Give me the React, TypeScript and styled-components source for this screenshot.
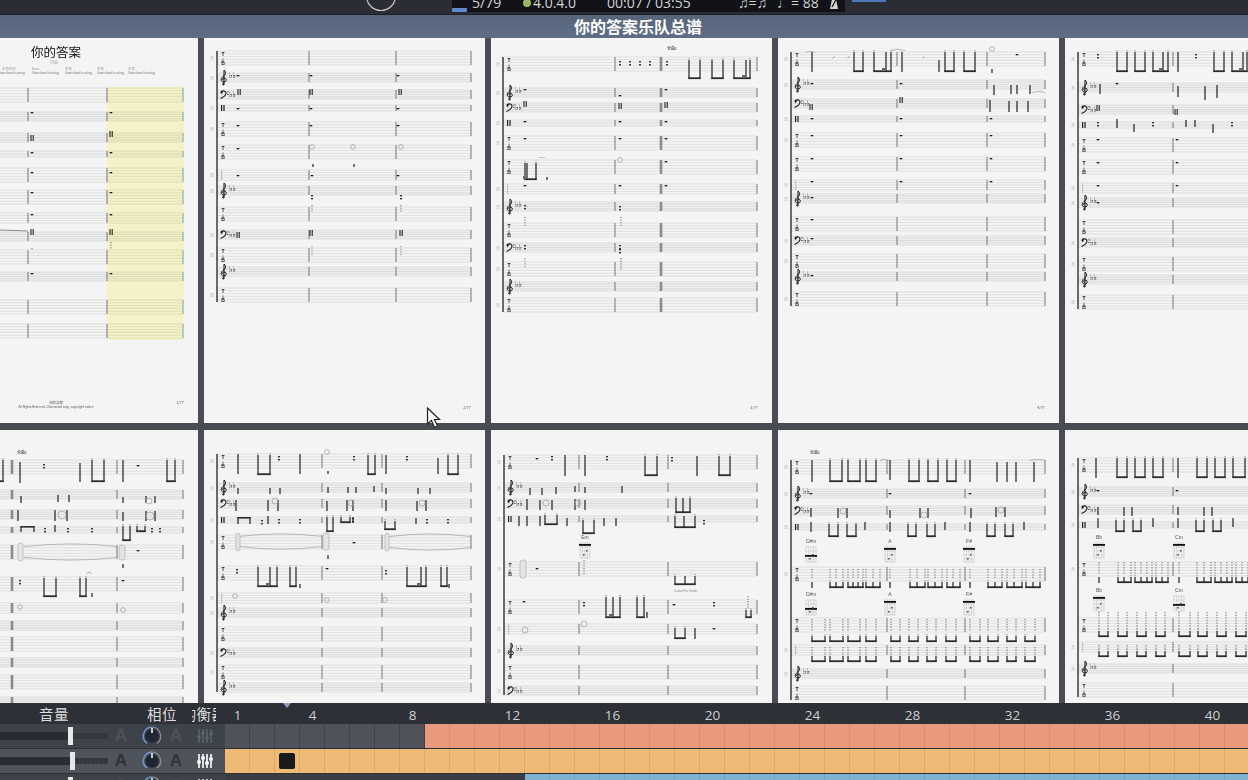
import React from 'react';
import styled, { createGlobalStyle } from 'styled-components';

const Global = createGlobalStyle`
  html, body { margin: 0; padding: 0; width: 1248px; height: 780px; overflow: hidden; background: #4a4c53; }
  #root { width: 1248px; height: 780px; }
`;

const CJK = `"Noto Sans CJK SC", "Liberation Sans", sans-serif`;

const Screen = styled.div`
  position: relative; width: 1248px; height: 780px; overflow: hidden;
  display: flex; flex-direction: column; font-family: ${CJK};
`;
const TopBar = styled.header`
  height: 15px; flex: none; background: #2a2d35; display: flex; overflow: hidden;
  padding-left: 366px; gap: 56px; box-sizing: border-box; border-bottom: 1px solid #1c1f26;
`;
const PlayArc = styled.svg`width: 30px; height: 14px; flex: none;`;
const Transport = styled.div`
  width: 393px; height: 12px; flex: none; background: #111319; display: flex; align-items: flex-end;
  overflow: hidden; color: #d4d4d4; font: 14px/14px "Open Sans", "Liberation Sans", sans-serif;
`;
const ProgressStub = styled.div`width: 15px; height: 4px; flex: none; background: #6288cc; border-radius: 1px;`;
const TItem = styled.div<{ $w: number }>`
  width: ${p => p.$w}px; flex: none; white-space: nowrap; margin-bottom: 2px; display: flex; align-items: center; gap: 2px;
`;
const StatusDot = styled.span`width: 8px; height: 8px; border-radius: 50%; background: #9ab95c; flex: none;`;
const MetronomeIcon = styled.svg`width: 10px; height: 12px; flex: none; margin-bottom: 0;`;
const TopAccent = styled.div`width: 34px; height: 2px; background: #4d76b8; margin-left: -49px; flex: none;`;
const TitleBar = styled.div`
  height: 23px; flex: none; background: linear-gradient(#566579, #5f6e86); color: #fff;
  display: flex; align-items: center; justify-content: center; box-sizing: border-box;
  font: bold 16px/21px ${CJK}; padding-left: 28px;
`;
const Sheets = styled.main`
  flex: 1; min-height: 0; overflow: hidden; background: #4a4c53;
  display: grid; grid-template-columns: repeat(5, 280.5px); grid-auto-rows: 385px; column-gap: 6.5px; row-gap: 7px;
  margin-left: -83px; width: 1440px;
`;
const PageSheet = styled.svg`
  display: block; width: 280.5px; height: 385px; background: #f4f4f5; filter: blur(0.4px);
`;
const Highlight = styled.rect`mix-blend-mode: multiply;`;
const Cursor = styled.svg`position: absolute; left: 426px; top: 407px; width: 16px; height: 22px;`;

const Panel = styled.section`
  height: 77px; flex: none; background: #2d3037; overflow: hidden; display: flex; flex-direction: column; position: relative;
`;
const HeaderRow = styled.div`height: 21px; flex: none; display: flex; color: #dcdcdc;`;
const HeadCell = styled.div<{ $w: number; $pl?: number }>`
  width: ${p => p.$w}px; box-sizing: border-box; padding-left: ${p => p.$pl || 0}px; flex: none; overflow: hidden;
  display: flex; justify-content: center; white-space: nowrap; font: 14.5px/22px ${CJK}; letter-spacing: .4px;
`;
const Ruler = styled.div`flex: 1; display: flex; position: relative;`;
const Tick = styled.div`
  width: 25px; flex: none; text-align: center; overflow: visible; color: #cfd0d2;
  font: 13.5px/24px "Open Sans", "Liberation Sans", sans-serif;
`;
const Marker = styled.div`
  position: absolute; left: 58px; top: 0; width: 0; height: 0;
  border-left: 4px solid transparent; border-right: 4px solid transparent; border-top: 5px solid #8d9dc0;
`;
const TrackRow = styled.div`height: 25px; flex: none; display: flex;`;
const TrackHead = styled.div<{ $bg: string }>`
  width: 225px; height: 24px; flex: none; background: ${p => p.$bg}; display: flex; align-items: center;
`;
const Fader = styled.div`position: relative; width: 108px; height: 8px; flex: none; display: flex;`;
const FaderFill = styled.div`width: 72px; background: #2a2c33; flex: none;`;
const FaderRest = styled.div`flex: 1; background: repeating-linear-gradient(90deg, #33353c 0 3px, #3c3e45 3px 4px); margin: 1px 0;`;
const FaderHandle = styled.div<{ $x: number }>`
  position: absolute; left: ${p => p.$x}px; top: -5px; width: 5px; height: 18px; background: #e8e8ea;
`;
const AMark = styled.span<{ $on?: boolean; $w: number }>`
  width: ${p => p.$w}px; flex: none; text-align: center; font: bold 17px/16px "Liberation Sans", sans-serif;
  color: ${p => (p.$on ? '#2f3239' : '#4f5259')};
`;
const Knob = styled.svg`width: 20px; height: 20px; flex: none; margin-left: 8px;`;
const EqIcon = styled.svg`width: 16px; height: 16px; flex: none; margin-left: 7px;`;
const Cells = styled.div`flex: 1; display: flex; height: 24px;`;
const Cell = styled.div<{ $bg: string; $line: string }>`
  width: 25px; flex: none; box-sizing: border-box; background: ${p => p.$bg}; border-right: 1px solid ${p => p.$line};
  display: flex; align-items: center; justify-content: center;
`;
const Clip = styled.div`width: 16px; height: 16px; border-radius: 2px; background: #1a1a1a; margin-right: 1px;`;

type Kind = 't' | 'g' | 'f' | 'd' | 's';
type Mark = any[];
interface Spec { x0: number; y0: number; left?: number; bars: number[]; thick?: number[]; staves: [Kind, number][]; marks: Mark[]; page?: string; }

const HEIGHT: Record<Kind, number> = { t: 14, g: 9, f: 9, d: 6, s: 10 };
const LINES: Record<Kind, number> = { t: 6, g: 5, f: 5, d: 3, s: 5 };

const Staff = ({ kind, y, l, r }: { kind: Kind; y: number; l: number; r: number }) => {
  const h = HEIGHT[kind], n = LINES[kind];
  return (
    <g>
      {(kind === 'g' || kind === 'f' || kind === 'd') && <rect x={l} y={y} width={r - l} height={h} fill="#eeeeef" />}
      {Array.from({ length: n }, (_, i) => (
        <line key={i} x1={l} x2={r} y1={y + (h * i) / (n - 1)} y2={y + (h * i) / (n - 1)} stroke="#d2d2d4" strokeWidth={0.6} />
      ))}
    </g>
  );
};

const FLATS = (x: number, y: number) => (
  <text x={x} y={y} fontSize={8.5} letterSpacing={-.8} fontFamily="DejaVu Sans, sans-serif" fill="#333">♭♭</text>
);

const Clef = ({ kind, y, l }: { kind: Kind; y: number; l: number }) => {
  if (kind === 'g')
    return (
      <g transform={`translate(${l + 3},${y - 3})`}>
        <path d="M4 15 C2 15.5 2 13 4 13.3 M4 15 L4 0 C6.5 2 6 4.5 3 6.5 C0 9 1 12 4 12 C7 12 7 8 4 8 C2.2 8 2 10 3.6 10" fill="none" stroke="#111" strokeWidth={1} />
        {FLATS(9, 8)}
      </g>
    );
  if (kind === 'f')
    return (
      <g transform={`translate(${l + 3},${y})`}>
        <path d="M1 2 C3 0 6.5 1 6 3.5 C5.5 6 3 7.5 .5 8.5" fill="none" stroke="#111" strokeWidth={1.1} />
        <circle cx={1.6} cy={2.6} r={1.1} fill="#111" />
        <rect x={7.4} y={1.4} width={1} height={1} fill="#111" /><rect x={7.4} y={4} width={1} height={1} fill="#111" />
        {FLATS(9, 7)}
      </g>
    );
  if (kind === 'd') return <g><rect x={l + 4} y={y} width={1.2} height={6} fill="#222" /><rect x={l + 6.4} y={y} width={1.2} height={6} fill="#222" /></g>;
  if (kind === 's') return <rect x={l + 4} y={y} width={1.2} height={10} fill="#c4c4c4" />;
  return (
    <text x={l + 6} y={y + 1} textAnchor="middle" fontSize={5} fontWeight={700} fontFamily="Liberation Sans, sans-serif" fill="#222">
      <tspan x={l + 6} dy={4}>T</tspan><tspan x={l + 6} dy={4.5} fontSize={3.5} fill="#999">A</tspan><tspan x={l + 6} dy={4.5}>B</tspan>
    </text>
  );
};

const Glyph = ({ m }: { m: Mark }) => {
  const k = m[0];
  if (k === 'u') {
    const [, a, b, y1, y2, extra] = m;
    return (
      <g>
        <rect x={a - .6} y={y1} width={1.2} height={y2 - y1} fill="#222" />
        <rect x={b - .6} y={y1} width={1.2} height={y2 - y1} fill="#222" />
        <rect x={a - .6} y={y2 - 1.7} width={b - a + 1.2} height={1.8} fill="#2c2c2c" />
        {extra != null && <rect x={extra - .6} y={y1} width={1.2} height={y2 - y1} fill="#222" />}
        {extra != null && <rect x={extra - 4} y={y2 - 4} width={4} height={3} fill="#666" />}
        <rect x={a - .8} y={y1 - 2} width={1.6} height={1.2} fill="#aaa" />
        <rect x={b - .8} y={y1 - 2} width={1.6} height={1.2} fill="#aaa" />
      </g>
    );
  }
  if (k === 'n') {
    const [, a, b, y1, y2] = m;
    return (
      <g>
        <rect x={a - .6} y={y1} width={1.2} height={y2 - y1} fill="#222" />
        <rect x={b - .6} y={y1} width={1.2} height={y2 - y1} fill="#222" />
        <rect x={a - .6} y={y1} width={b - a + 1.2} height={1.6} fill="#2c2c2c" />
      </g>
    );
  }
  if (k === '|') return <rect x={m[1] - .6} y={m[2]} width={1.2} height={m[3] - m[2]} fill="#222" />;
  if (k === '-') return <rect x={m[1] - 1.3} y={m[2]} width={2.6} height={1.3} fill="#1a1a1a" />;
  if (k === 'B')
    return (
      <g>
        <rect x={m[1] - 1.5} y={m[2] - 3} width={1} height={6} fill="#111" />
        <rect x={m[1] + .7} y={m[2] - 3} width={1} height={6} fill="#111" />
      </g>
    );
  if (k === ':')
    return (
      <g>
        <rect x={m[1] - 1} y={m[2] - 2} width={2} height={1.4} fill="#333" />
        <rect x={m[1] - 1} y={m[2] + 1} width={2} height={1.4} fill="#333" />
      </g>
    );
  if (k === 'o') return <circle cx={m[1]} cy={m[2]} r={m[3] || 2.4} fill="none" stroke="#a3a3a3" strokeWidth={0.8} />;
  if (k === 'L') {
    const [, a, b, y, h] = m;
    return (
      <path d={`M${a} ${y + h * .2} Q${(a + b) / 2} ${y - h * .1} ${b} ${y + h * .2} M${a} ${y + h * .8} Q${(a + b) / 2} ${y + h * 1.1} ${b} ${y + h * .8}`} fill="none" stroke="#aaa" strokeWidth={.8} />
    );
  }
  if (k === '0') return <rect x={m[1]} y={m[2]} width={m[3]} height={m[4]} rx={2.5} fill="#e4e4e4" stroke="#b0b0b0" strokeWidth={.7} />;
  if (k === '~') return <path d={`M${m[1]} ${m[3] + 1.5} Q${(m[1] + m[2]) / 2} ${m[3] - 1} ${m[2]} ${m[3] + 1.5}`} fill="none" stroke="#999" strokeWidth={.7} />;
  if (k === 'v') {
    const items = [];
    for (let y = m[2]; y <= m[3]; y += 2.6) items.push(<rect key={y} x={m[1] - .8} y={y} width={1.6} height={1.2} fill={m[4] || '#9a9a9a'} />);
    return <g>{items}</g>;
  }
  if (k === 'c') {
    const [, x, y, label, barY] = m;
    return (
      <g>
        <text x={x} y={y - 4} textAnchor="middle" fontSize={5} fontFamily="Liberation Sans, sans-serif" fill="#555">{label}</text>
        <rect x={x - 5} y={y} width={10} height={15} fill="#f6f6f6" stroke="#a5a5a5" strokeWidth={.4} />
        {[2.5, 5, 7.5].map(d => <line key={d} x1={x - 5 + d} x2={x - 5 + d} y1={y} y2={y + 15} stroke="#b0b0b0" strokeWidth={.4} />)}
        {[4, 8, 12].map(d => <line key={d} x1={x - 5} x2={x + 5} y1={y + d} y2={y + d} stroke="#b0b0b0" strokeWidth={.4} />)}
        <rect x={x - 6} y={y + (barY ?? 1)} width={12} height={1.8} fill="#111" />
        <rect x={x - 2} y={y + 11} width={1.5} height={1.5} fill="#555" />
        <rect x={x + 1} y={y + 7} width={1.5} height={1.5} fill="#555" />
      </g>
    );
  }
  if (k === 'x')
    return <text x={m[1]} y={m[2]} textAnchor={m[5] || 'middle'} fontSize={m[3] || 4} fill={m[4] || '#666'} fontFamily={CJK}>{m[6] || ''}</text>;
  return null;
};

const dashes = (xs: number[], ys: number[]): Mark[] => ys.flatMap(y => xs.map(x => ['-', x, y]));

const strum = (g: number[], y1: number, y2: number, uy2: number): Mark[] => {
  const out: Mark[] = [];
  g.forEach(x => out.push(['v', x, y1, y2]));
  if (g.length > 1) out.push(['u', g[0], g[g.length - 1], uy2 - 6, uy2]);
  g.slice(1, -1).forEach(x => out.push(['|', x, uy2 - 6, uy2]));
  if (g.length === 1) out.push(['|', g[0], uy2 - 6, uy2]);
  return out;
};

const p4Groups = [[812], [830, 836, 843], [848, 853, 858, 863], [866, 873, 880], [890], [910, 917, 925], [928, 935, 942], [947, 953, 960], [970], [988, 995, 1002], [1007, 1014, 1022], [1026, 1033, 1040]];
const p5Groups = [[1099], [1118, 1124, 1131], [1135, 1141, 1147, 1152], [1156, 1162, 1168], [1179], [1197, 1204, 1211], [1215, 1221, 1227, 1232], [1236, 1242, 1248]];
const pairGroups4 = [[812, 825], [830, 843], [848, 860], [866, 876], [891, 900], [909, 918], [927, 936], [946, 956], [970, 980], [988, 998], [1007, 1016], [1025, 1035]];
const pairGroups5 = [[1099, 1108], [1118, 1127], [1137, 1146], [1156, 1165], [1179, 1190], [1198, 1207], [1217, 1226], [1236, 1246]];

const rep4Drum: Mark[] = [[811, 829, 838, 847, 856, 865], [890, 908, 916, 927, 935, 945], [970, 987, 995, 1005, 1013, 1024]].flatMap(([a, b, c, d, e, f]) => [
  ['|', a, 522, 532], ['u', b, c, 524, 537], ['u', d, e, 524, 537], ['|', f, 522, 530],
] as Mark[]);

const SPECS: Spec[] = [
  {
    x0: -83, y0: 38, left: -70, bars: [28, 107, 183],
    staves: [['t', 88], ['g', 112], ['f', 133], ['d', 151], ['t', 168], ['t', 190], ['s', 213], ['g', 232], ['t', 250], ['f', 272], ['t', 300], ['t', 324]],
    marks: [
      ...dashes([32, 111], [112, 152, 172, 192, 214, 273]),
      ['B', 32, 138], ['B', 111, 134], ['B', 32, 232], ['B', 111, 232], ['v', 111, 242, 248], ['v', 32, 248, 250],
      ['x', 32, 74, 3.6, '#777', 'start', 'Standard tuning'], ['x', 65, 74, 3.6, '#777', 'start', 'Standard tuning'],
      ['x', 97, 74, 3.6, '#777', 'start', 'Standard tuning'], ['x', 128, 74, 3.6, '#777', 'start', 'Standard tuning'],
      ['x', -2, 74, 3.6, '#777', 'start', 'Standard tuning'],
      ['x', 32, 70, 3.4, '#999', 'start', 'Bass'], ['x', 65, 70, 3.4, '#999', 'start', '吉他'], ['x', 97, 70, 3.4, '#999', 'start', '吉他'], ['x', 128, 70, 3.4, '#999', 'start', '主音'], ['x', 2, 70, 3.4, '#999', 'start', '主音吉他'],
      ['x', 56, 404, 3.4, '#555', 'middle', '你的答案'], ['x', 56, 408, 3, '#555', 'middle', 'All Rights Reserved. Unlicensed copy, copyright notice'], ['x', 180, 404, 3.6, '#555', 'middle', '1/77'],
    ],
    page: 'p1',
  },
  {
    x0: 204, y0: 38, left: 217, bars: [309, 396, 471],
    staves: [['t', 51], ['g', 73], ['f', 90], ['d', 105], ['t', 122], ['t', 145], ['s', 170], ['g', 186], ['t', 207], ['f', 230], ['t', 248], ['g', 267], ['t', 288]],
    marks: [
      ...dashes([238, 311, 398], [75, 108, 125]), ...dashes([238, 312, 398], [175]),
      ['B', 239, 92], ['B', 311, 92], ['B', 400, 92], ['-', 238, 148], ['o', 312, 147], ['o', 353, 147], ['o', 401, 147], ['|', 313, 164, 167], ['|', 354, 164, 167],
      [':', 312, 197], [':', 401, 197], ['v', 312, 205, 212], ['v', 401, 205, 212],
      ['B', 238, 235], ['B', 311, 233], ['B', 401, 233], ['v', 312, 246, 256, '#aaa'], ['v', 401, 246, 256, '#aaa'], ['x', 467, 409, 3.6, '#555', 'middle', '2/77'],
    ],
  },
  {
    x0: 491, y0: 38, left: 503, bars: [615, 757], thick: [661],
    staves: [['t', 57], ['g', 88], ['f', 103], ['d', 120], ['t', 136], ['t', 160], ['s', 184], ['g', 202], ['t', 223], ['f', 243], ['t', 262], ['g', 282], ['t', 298]],
    marks: [
      ['x', 672, 50, 4, '#222', 'middle', '全曲1'], [':', 620, 63], [':', 630, 63], [':', 640, 63], [':', 650, 63], [':', 667, 63],
      ['u', 689, 700, 60, 79], ['u', 712, 723, 60, 79], ['u', 734, 750, 60, 79, 746],
      ['-', 525, 89], ['-', 666, 89], ['-', 620, 95], ['B', 525, 104], ['B', 620, 106], ['B', 666, 105],
      ...dashes([525, 620, 666], [121, 138, 185]), ['-', 666, 161], ['o', 620, 160], ['u', 525, 536, 163, 180, 527], ['|', 547, 177, 180],
      ['x', 542, 158, 4, '#222', 'middle', '......'],
      [':', 525, 207], [':', 620, 208], ['v', 525, 217, 225], ['v', 621, 217, 225], [':', 525, 247], [':', 620, 247], [':', 620, 251],
      ['v', 525, 258, 268, '#aaa'], ['v', 621, 258, 270, '#7aa67e'], ['x', 754, 409, 3.6, '#555', 'middle', '3/77'],
    ],
  },
  {
    x0: 778, y0: 38, left: 791, bars: [897, 987, 1045],
    staves: [['t', 52], ['g', 80], ['f', 99], ['d', 116], ['t', 133], ['t', 157], ['s', 180], ['g', 194], ['t', 217], ['f', 236], ['t', 254], ['g', 272], ['t', 292]],
    marks: [
      ['|', 812, 52, 72], ['u', 854, 863, 52, 72], ['u', 874, 891, 52, 72, 886], ['|', 902, 52, 72], ['|', 939, 60, 72], ['u', 945, 954, 52, 72], ['u', 964, 975, 52, 72],
      ['x', 833, 58, 6, '#444', 'middle', '⸝'], ['x', 848, 58, 6, '#444', 'middle', '⸝'], ['x', 923, 58, 6, '#444', 'middle', '⸝'],
      ['o', 992, 49], ['|', 992, 69, 73], ['-', 1017, 54], ['~', 806, 815, 51], ['~', 890, 905, 49],
      ['-', 812, 83], ['-', 901, 83], ['|', 994, 85, 95], ['|', 1011, 85, 94], ['|', 1017, 85, 94], ['|', 1030, 85, 94], ['~', 1032, 1045, 91],
      ['B', 811, 107], ['B', 901, 100], ['|', 990, 100, 112], ['|', 1009, 101, 112], ['|', 1017, 101, 112], ['|', 1028, 101, 112],
      ...dashes([812, 901, 991], [118, 135, 158, 181]), ['-', 812, 197], ['-', 812, 219], ['-', 812, 238], ['-', 812, 275],
      ['x', 1041, 409, 3.6, '#555', 'middle', '4/77'],
    ],
  },
  {
    x0: 1065, y0: 38, left: 1078, bars: [1173, 1331],
    staves: [['t', 52], ['g', 83], ['f', 105], ['d', 122], ['t', 138], ['t', 160], ['s', 183], ['g', 198], ['t', 220], ['f', 238], ['t', 257], ['g', 275], ['t', 295]],
    marks: [
      [':', 1098, 56], ['u', 1117, 1127, 52, 72], ['u', 1135, 1145, 52, 72], ['u', 1153, 1168, 52, 72, 1163], ['|', 1178, 52, 72], [':', 1196, 56], ['u', 1214, 1224, 52, 72], ['u', 1232, 1247, 52, 72, 1243],
      ['|', 1100, 84, 94], ['-', 1117, 83], ['|', 1178, 86, 97], ['|', 1205, 86, 100], ['|', 1217, 85, 98],
      ['B', 1098, 108], ['B', 1176, 112], [':', 1098, 124], ['|', 1117, 119, 128], ['|', 1134, 124, 132], [':', 1153, 124], ['|', 1186, 120, 127], ['|', 1195, 120, 127], ['|', 1213, 124, 133], [':', 1232, 124],
      ...dashes([1098, 1177], [139, 162, 185]), ['-', 1098, 202],
    ],
  },
  {
    x0: -83, y0: 430, left: -70, bars: [117, 183], thick: [12],
    staves: [['t', 460], ['g', 490], ['f', 510], ['d', 527], ['t', 545], ['t', 577], ['s', 603], ['g', 621], ['t', 637], ['f', 658], ['t', 675], ['g', 697]],
    marks: [
      ['x', 22, 454, 4, '#222', 'middle', '全曲1'], ['u', -6, 3, 460, 482], ['|', 20, 462, 483], [':', 44, 466], ['|', 80, 463, 482], ['u', 92, 104, 460, 482], ['|', 123, 460, 482], ['-', 138, 465], ['u', 167, 175, 460, 482],
      ['|', 21, 496, 503], ['|', 58, 495, 502], ['|', 69, 495, 502], ['|', 123, 497, 503], ['|', 146, 496, 503], ['|', 155, 496, 503], ['o', 149, 501, 3],
      ['|', 18, 510, 521], ['|', 55, 510, 521], ['|', 67, 510, 521], ['|', 123, 512, 521], ['|', 146, 511, 521], ['|', 155, 511, 521], ['o', 62, 515, 4], ['o', 150, 516, 4],
      ['n', 21, 34, 526, 532], [':', 45, 530], ['|', 55, 525, 532], [':', 68, 530], [':', 92, 530], ['u', 123, 130, 526, 541], ['u', 137, 145, 526, 532], [':', 152, 530], [':', 160, 530],
      ['0', 18, 543, 5, 18], ['L', 24, 117, 543, 18], ['0', 119, 545, 6, 15], ['-', 138, 550], ['|', 123, 564, 568],
      [':', 20, 582], ['u', 44, 56, 578, 597], ['u', 80, 86, 578, 597], ['|', 92, 593, 597], ['-', 123, 580], ['~', 86, 92, 572],
      ['o', 20, 607], ['o', 123, 610],
    ],
  },
  {
    x0: 204, y0: 430, left: 217, bars: [322, 382, 471],
    staves: [['t', 454], ['g', 483], ['f', 499], ['d', 517], ['t', 535], ['t', 566], ['s', 593], ['g', 608], ['t', 627], ['f', 648], ['t', 665], ['g', 683]],
    marks: [
      ['|', 238, 454, 474], ['u', 258, 270, 455, 475], [':', 279, 458], ['|', 300, 454, 474], ['o', 327, 452], ['|', 328, 471, 474], [':', 354, 458], ['u', 368, 375, 455, 475], ['|', 386, 455, 474], [':', 407, 458], ['|', 438, 458, 474], ['u', 448, 458, 455, 475],
      ['|', 238, 488, 494], ['|', 270, 488, 494], ['|', 280, 488, 494], ['|', 328, 487, 493], ['|', 348, 487, 493], ['|', 356, 487, 493], ['|', 374, 486, 492], ['|', 386, 488, 494], ['|', 418, 488, 494], ['|', 430, 488, 494],
      ['|', 236, 500, 511], ['|', 268, 500, 511], ['|', 278, 500, 511], ['|', 327, 501, 511], ['|', 347, 500, 511], ['|', 353, 500, 511], ['|', 386, 500, 511], ['|', 417, 501, 511], ['|', 426, 500, 511], ['o', 275, 501, 3], ['o', 351, 503, 3], ['o', 422, 503, 3],
      ['n', 238, 250, 517, 524], [':', 262, 522], ['|', 268, 516, 524], [':', 279, 521], [':', 300, 521], ['u', 327, 333, 517, 532], ['u', 341, 350, 517, 523], [':', 353, 520], ['|', 353, 517, 523], ['u', 385, 395, 521, 530], ['|', 416, 518, 524], [':', 427, 521], [':', 448, 521],
      ['0', 236, 533, 4, 18], ['L', 240, 322, 533, 17], ['0', 323, 533, 6, 17], ['-', 354, 542], ['0', 385, 533, 4, 18], ['L', 389, 471, 533, 18], ['|', 328, 555, 559],
      [':', 237, 571], ['u', 258, 277, 567, 587, 270], ['u', 290, 296, 567, 587], ['|', 300, 584, 588], ['-', 327, 568], [':', 386, 572], ['u', 407, 426, 567, 587, 421], ['u', 441, 447, 567, 587], ['|', 449, 584, 588],
      ['o', 235, 596], ['o', 327, 600], ['o', 385, 600],
    ],
  },
  {
    x0: 491, y0: 430, left: 504, bars: [579, 668, 757],
    staves: [['t', 455], ['g', 483], ['f', 499], ['d', 516], ['t', 562], ['t', 600], ['s', 624], ['g', 646], ['t', 665], ['f', 686]],
    marks: [
      ['-', 537, 458], [':', 552, 458], ['|', 565, 455, 476], ['|', 585, 455, 476], [':', 607, 458], ['u', 645, 657, 456, 476], [':', 672, 459], ['|', 697, 456, 476], ['u', 719, 730, 456, 476],
      ['|', 530, 488, 495], ['|', 542, 488, 495], ['|', 556, 487, 494], ['|', 575, 486, 492], ['|', 585, 487, 493], ['|', 622, 486, 493],
      ['u', 676, 690, 498, 513], ['|', 683, 498, 513],
      ['|', 527, 499, 510], ['|', 540, 500, 510], ['|', 552, 500, 510], ['|', 575, 499, 510], ['|', 585, 500, 510], ['o', 546, 503, 3], ['o', 578, 503, 3],
      ['|', 519, 516, 526], ['|', 527, 516, 526], ['|', 540, 516, 526], ['u', 545, 557, 515, 525], ['|', 567, 518, 526], ['u', 583, 594, 520, 534], ['|', 604, 518, 526], ['|', 616, 518, 526], ['u', 675, 695, 516, 528], ['|', 684, 516, 528], [':', 704, 522],
      ['c', 585, 543, 'Em', 1], ['0', 520, 560, 6, 18], ['-', 537, 568], ['v', 584, 560, 575], ['u', 675, 695, 576, 585], ['|', 685, 576, 585], ['x', 686, 592, 3, '#888', 'middle', 'Guitar Pro Guitar'],
      ['-', 524, 601], [':', 584, 604], ['u', 606, 620, 597, 618, 613], ['u', 637, 644, 597, 618], ['|', 647, 612, 618], ['-', 674, 604], [':', 714, 604], ['v', 748, 596, 608], ['u', 746, 751, 610, 618],
      ['o', 584, 624, 3], ['o', 525, 630, 3], ['u', 675, 685, 628, 639], ['|', 695, 628, 639], ['-', 714, 628],
    ],
  },
  {
    x0: 778, y0: 430, left: 791, bars: [887, 965, 1045],
    staves: [['t', 460], ['g', 489], ['f', 506], ['d', 524], ['t', 567], ['t', 618], ['s', 645], ['g', 669], ['t', 686]],
    marks: [
      ['x', 815, 454, 4, '#222', 'middle', '全曲1'],
      ['|', 812, 460, 482], ['u', 830, 842, 460, 482], ['u', 848, 860, 460, 482], ['u', 866, 876, 460, 482], ['|', 890, 460, 480], ['u', 909, 919, 460, 482], ['u', 928, 938, 460, 482], ['u', 947, 956, 460, 482], ['|', 970, 460, 482], ['|', 997, 462, 482], ['|', 1007, 462, 482], ['|', 1016, 462, 482], ['|', 1034, 462, 482], ['~', 880, 889, 459], ['~', 1030, 1045, 459],
      ['-', 811, 493], ['-', 890, 493], ['-', 970, 493],
      ['|', 811, 508, 517], ['|', 838, 508, 518], ['|', 847, 508, 518], ['o', 843, 511, 3], ['|', 890, 510, 518], ['|', 920, 508, 518], ['|', 928, 508, 518], ['o', 924, 515, 3], ['|', 971, 508, 518], ['|', 996, 507, 517], ['|', 1005, 507, 517], ['o', 1001, 510, 3],
      ...rep4Drum,
      ['c', 811, 547, 'C#m', 8], ['c', 890, 547, 'A', 1], ['c', 969, 547, 'F#', 1], ['c', 811, 600, 'C#m', 8], ['c', 890, 600, 'A', 1], ['c', 969, 600, 'F#', 1],
      ...p4Groups.flatMap(g => strum(g, 569, 579, 588)),
      ...pairGroups4.flatMap(g => strum(g, 619, 632, 642)),
      ...pairGroups4.flatMap(g => strum(g, 647, 654, 662)),
    ],
  },
  {
    x0: 1065, y0: 430, left: 1078, bars: [1173, 1331],
    staves: [['t', 458], ['g', 487], ['f', 505], ['d', 522], ['t', 562], ['t', 618], ['s', 642], ['g', 664], ['t', 683]],
    marks: [
      ['|', 1096, 458, 478], ['u', 1117, 1127, 458, 478], ['u', 1135, 1145, 458, 478], ['u', 1153, 1163, 458, 478], ['|', 1178, 458, 478], ['u', 1197, 1207, 458, 478], ['u', 1215, 1225, 458, 478], ['u', 1233, 1245, 458, 478],
      ['-', 1098, 490], ['-', 1177, 490], ['|', 1098, 507, 515], ['|', 1124, 507, 516], ['|', 1132, 507, 516], ['|', 1178, 507, 515], ['|', 1204, 507, 516], ['|', 1212, 507, 516],
      ['|', 1098, 518, 528], ['u', 1116, 1124, 520, 532], ['u', 1133, 1141, 520, 532], ['|', 1153, 518, 527], ['|', 1178, 518, 528], ['u', 1196, 1204, 520, 532], ['u', 1213, 1221, 520, 532], ['|', 1233, 518, 527],
      ['c', 1099, 543, 'Bb', 1], ['c', 1179, 543, 'Cm', 1], ['c', 1099, 596, 'Bb', 1], ['c', 1179, 596, 'Cm', 8],
      ...p5Groups.flatMap(g => strum(g, 562, 574, 583)),
      ...pairGroups5.flatMap(g => strum(g, 612, 628, 637)),
      ...pairGroups5.flatMap(g => strum(g, 645, 650, 657)),
    ],
  },
];

const Sheet = ({ s }: { s: Spec }) => {
  const last = s.staves[s.staves.length - 1];
  const right = Math.max(...s.bars, ...(s.thick || []));
  const staffLeft = s.left ?? s.x0;
  return (
    <PageSheet viewBox={`${s.x0} ${s.y0} 280.5 385`}>
      {s.staves.map(([k, y], i) => <Staff key={i} kind={k} y={y} l={staffLeft} r={right} />)}
      {s.page === 'p1' && <Highlight x={107} y={87} width={77} height={253} fill="#fffed0" />}
      {s.staves.map(([k, y], i) => (
        <g key={i}>
          {s.bars.map(x => <rect key={x} x={x - .5} y={y} width={1} height={HEIGHT[k]} fill={s.page === 'p1' && x === 183 ? '#7fa8a0' : '#777'} />)}
          {(s.thick || []).map(x => <rect key={x} x={x - 1.3} y={y} width={2.6} height={HEIGHT[k]} fill="#8b8b8b" />)}
          <Clef kind={k} y={y} l={staffLeft} />
        </g>
      ))}
      {s.left != null && <rect x={s.left - .6} y={s.staves[0][1]} width={1.2} height={Math.max(0, last[1] + HEIGHT[last[0]] - s.staves[0][1])} fill="#111" />}
      {s.left != null && s.staves.map(([k, y], i) => (
        <text key={i} x={s.left! - 5} y={y + HEIGHT[k] / 2 + 2} textAnchor="middle" fontSize={4} fill="#aaa" fontFamily={CJK}>{i % 3 === 2 ? '' : '吉'}</text>
      ))}
      {s.marks.map((m, i) => <Glyph key={i} m={m} />)}
      {s.page === 'p1' && (
        <>
          <text x={56} y={57} textAnchor="middle" fontSize={12.5} fill="#111" fontFamily={CJK}>你的答案</text>
          <text x={54} y={64} textAnchor="middle" fontSize={4} fill="#aaa" fontFamily={CJK}>词曲</text>
          <path d="M-83 230 L0 230 L28 231" stroke="#888" strokeWidth={1} fill="none" />
        </>
      )}
    </PageSheet>
  );
};

const KnobGlyph = () => (
  <Knob viewBox="0 0 20 20">
    <circle cx={10} cy={10} r={6.8} fill="#1f2735" />
    <path d="M5 17.2 A9 9 0 0 1 10 1" fill="none" stroke="#6d93c9" strokeWidth={1.6} />
    <path d="M10 1 A9 9 0 0 1 15 17.2" fill="none" stroke="#8d9199" strokeWidth={1.2} />
    <line x1={10} y1={2} x2={10} y2={7} stroke="#f2f2f2" strokeWidth={1.6} />
  </Knob>
);

const Eq = ({ color }: { color: string }) => (
  <EqIcon viewBox="0 0 16 16">
    {[[2, 9], [6, 5], [10, 10], [14, 6]].map(([x, y]) => (
      <g key={x}>
        <rect x={x - .8} y={1} width={1.6} height={14} fill={color} />
        <rect x={x - 1.8} y={y - 1.5} width={3.6} height={3} fill={color} />
      </g>
    ))}
  </EqIcon>
);

const Strip = ({ bg, x, eq, on }: { bg: string; x: number; eq: string; on?: boolean }) => (
  <TrackHead $bg={bg}>
    <Fader>
      <FaderFill />
      <FaderRest />
      <FaderHandle $x={x} />
    </Fader>
    <AMark $on={on} $w={26}>A</AMark>
    <KnobGlyph />
    <AMark $on={on} $w={28}>A</AMark>
    <Eq color={eq} />
  </TrackHead>
);

const N = Array.from({ length: 41 }, (_, i) => i);
const TICKS: Record<number, string> = { 0: '1', 3: '4', 7: '8', 11: '12', 15: '16', 19: '20', 23: '24', 27: '28', 31: '32', 35: '36', 39: '40' };

export default function App() {
  return (
    <>
      <Global />
      <Screen>
        <TopBar>
          <PlayArc viewBox="0 0 30 14"><circle cx={15} cy={-4} r={14.5} fill="none" stroke="#c8c8c8" strokeWidth={1.2} /></PlayArc>
          <Transport>
            <ProgressStub />
            <TItem $w={5} />
            <TItem $w={51}>5/79</TItem>
            <TItem $w={84}><StatusDot />4.0.4.0</TItem>
            <TItem $w={131}>00:07 / 03:55</TItem>
            <TItem $w={39}>♫=♫</TItem>
            <TItem $w={52}>♩= 88</TItem>
            <TItem $w={14}>
              <MetronomeIcon viewBox="0 0 10 12">
                <path d="M3 1 L7 1 L9 11 L1 11 Z" fill="#d4d4d4" />
                <line x1={3} y1={9} x2={8} y2={0} stroke="#111319" strokeWidth={1.2} />
              </MetronomeIcon>
            </TItem>
          </Transport>
          <TopAccent />
        </TopBar>
        <TitleBar>你的答案乐队总谱</TitleBar>
        <Sheets>
          {SPECS.map((s, i) => <Sheet key={i} s={s} />)}
        </Sheets>
        <Panel>
          <HeaderRow>
            <HeadCell $w={108}>音量</HeadCell>
            <HeadCell $w={84} $pl={24}>相位</HeadCell>
            <HeadCell $w={24}>均衡器</HeadCell>
            <HeadCell $w={9} />
            <Ruler>
              <Marker />
              {N.map(i => <Tick key={i}>{TICKS[i] || ''}</Tick>)}
            </Ruler>
          </HeaderRow>
          <TrackRow>
            <Strip bg="#3e4249" x={68} eq="#56676b" />
            <Cells>
              {N.map(i => (i < 8
                ? <Cell key={i} $bg="#4f5258" $line="#3f4248" />
                : <Cell key={i} $bg="#ea9a7c" $line="#d98d72" />))}
            </Cells>
          </TrackRow>
          <TrackRow>
            <Strip bg="#4f535c" x={70} eq="#ffffff" on />
            <Cells>
              {N.map(i => <Cell key={i} $bg="#eebb76" $line="#d8a869">{i === 2 && <Clip />}</Cell>)}
            </Cells>
          </TrackRow>
          <TrackRow>
            <Strip bg="#3e4249" x={68} eq="#e8e8e8" />
            <Cells>
              {N.map(i => (i < 12
                ? <Cell key={i} $bg="#3a3d44" $line="#3a3d44" />
                : <Cell key={i} $bg="#7fb0cf" $line="#74a2c0" />))}
            </Cells>
          </TrackRow>
        </Panel>
        <Cursor viewBox="0 0 16 22">
          <path d="M1.5 1 L1.5 17 L5.5 13.5 L8.5 20.5 L11.5 19 L8.5 12.5 L13.5 12.5 Z" fill="#f5f5f5" stroke="#222" strokeWidth={1.2} />
        </Cursor>
      </Screen>
    </>
  );
}
